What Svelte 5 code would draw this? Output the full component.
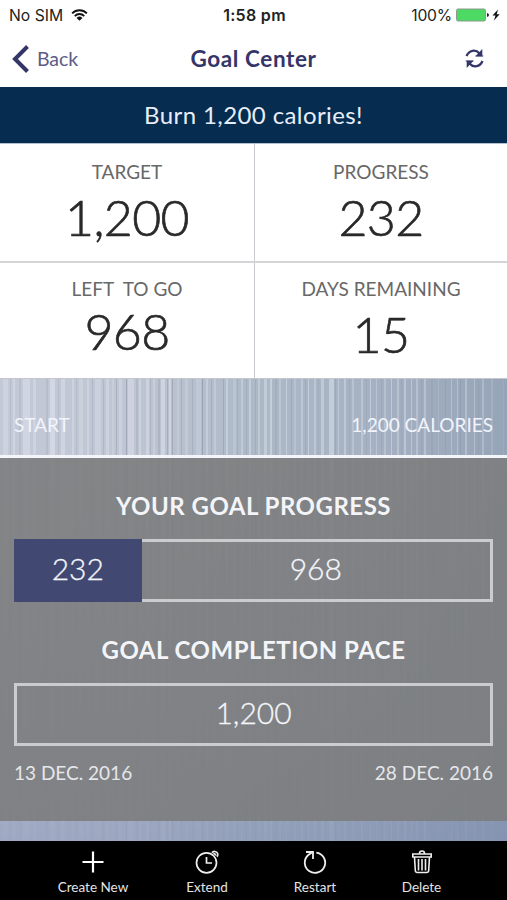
<script>
    const stats = [
        { name: 'target', label: 'TARGET', value: '1,200' },
        { name: 'progress', label: 'PROGRESS', value: '232' },
        { name: 'left', label: 'LEFT\u00a0 TO GO', value: '968' },
        { name: 'days', label: 'DAYS REMAINING', value: '15' }
    ];

    const done = 127.5;
    const total = 479;

    // brushed metal: x, width, opacity
    const light = [
        [3, 5, 0.25], [13, 2, 0.3], [23, 7, 0.35], [33, 3, 0.3], [50, 5, 0.4], [61, 4, 0.35],
        [72, 2, 0.3], [79, 4, 0.25], [87, 2, 0.3], [95, 6, 0.25], [106, 3, 0.3], [112, 2, 0.2],
        [119, 3, 0.3], [128, 6, 0.35], [139, 2, 0.3], [146, 3, 0.35], [153, 2, 0.25], [161, 4, 0.4],
        [169, 2, 0.4], [177, 2, 0.2], [185, 3, 0.2], [196, 5, 0.2], [206, 2, 0.3], [214, 2, 0.25],
        [226, 2, 0.35], [233, 3, 0.2], [241, 2, 0.3], [249, 2, 0.35], [258, 2, 0.3], [264, 3, 0.35],
        [270, 2, 0.4], [279, 2, 0.25], [286, 1, 0.4], [294, 2, 0.2], [301, 2, 0.3], [308, 1, 0.4],
        [314, 2, 0.3], [321, 3, 0.35], [329, 5, 0.4], [338, 1, 0.35], [344, 2, 0.35], [352, 2, 0.25],
        [361, 2, 0.3], [370, 1, 0.4], [376, 1, 0.3], [384, 2, 0.25], [391, 1, 0.4], [397, 2, 0.3],
        [404, 2, 0.35], [411, 1, 0.35], [416, 2, 0.3], [424, 2, 0.3], [438, 1, 0.15], [451, 1, 0.3],
        [457, 1, 0.3], [465, 2, 0.3], [474, 1, 0.3], [482, 2, 0.25], [491, 2, 0.15], [503, 1, 0.1]
    ];
    const dark = [
        [10, 1, 0.12], [19, 2, 0.1], [46, 2, 0.12], [58, 1, 0.12], [76, 1, 0.12], [92, 1, 0.15],
        [103, 1, 0.15], [116, 1, 0.2], [126, 1, 0.3], [136, 2, 0.12], [150, 1, 0.15], [158, 2, 0.15],
        [167, 1, 0.2], [172, 1, 0.25], [181, 1, 0.15], [192, 1, 0.15], [202, 1, 0.3], [211, 1, 0.15],
        [223, 1, 0.2], [237, 1, 0.15], [246, 1, 0.15], [255, 1, 0.15], [275, 2, 0.12], [291, 1, 0.15],
        [305, 1, 0.15], [318, 1, 0.12], [335, 1, 0.15], [349, 1, 0.12], [366, 1, 0.12], [381, 1, 0.12],
        [401, 1, 0.12], [421, 1, 0.12], [431, 2, 0.08], [445, 1, 0.12], [460, 1, 0.15], [478, 1, 0.1]
    ];
</script>

<main>
    <div class="status">
        <div class="carrier">
            <span>No SIM</span>
            <svg width="17" height="14" viewBox="0 0 18 14" fill="none" stroke="#111" stroke-width="2">
                <path d="M1.2 5.2a11 11 0 0 1 15.6 0" />
                <path d="M4 8.1a7 7 0 0 1 10 0" />
                <path d="M5.9 10.1a4.4 4.4 0 0 1 6.2 0L9 13.2z" fill="#111" stroke="none" />
            </svg>
        </div>
        <b>1:58 pm</b>
        <div class="power">
            <span>100%</span>
            <svg width="44" height="14" viewBox="0 0 44 14">
                <rect x="0.5" y="1" width="29" height="12" rx="1.5" fill="#4cd964" stroke="#8d9a8e" />
                <path d="M31 5v4q2-.3 2-2t-2-2z" fill="#222" />
                <path d="M42 1.500l-5.500 6h3l-1.600 5 5.800-6.200h-3z" fill="#111" />
            </svg>
        </div>
    </div>

    <nav>
        <button class="back">
            <svg width="18" height="28" viewBox="0 0 18 28" fill="none" stroke="#343568" stroke-width="4">
                <path d="M15.5 1.5L3 14l12.500 12.500" />
            </svg>
            <span>Back</span>
        </button>
        <h1>Goal Center</h1>
        <button class="sync" aria-label="Refresh">
            <svg width="19" height="19" viewBox="0 0 19 19">
                <path d="M1.500 7C4 1.200 10.500-.2 14.500 4.500M17.500 12C15 17.800 8.500 19.200 4.500 14.500" fill="none" stroke="#343568" stroke-width="2.300" />
                <path d="M17.300 0v7.200H10.500zM1.700 19v-7.200H8.500z" fill="#343568" />
                <path d="M10.500 7h7.800M.7 12h7.800" stroke="#343568" stroke-width="1.200" />
            </svg>
        </button>
    </nav>

    <div class="banner">Burn 1,200 calories!</div>

    <section class="stats">
        {#each stats as stat}
            <div class="stat {stat.name}">
                <span>{stat.label}</span>
                <strong>{stat.value}</strong>
            </div>
        {/each}
    </section>

    <section class="metal">
        <svg class="brushed" width="507" height="462" viewBox="0 0 507 462" preserveAspectRatio="none">
            <defs>
                <linearGradient id="steel" x1="0" y1="0" x2="1" y2="0">
                    <stop offset="0" stop-color="#c4c9d7" />
                    <stop offset="0.25" stop-color="#c0c5d3" />
                    <stop offset="0.5" stop-color="#adb9c7" />
                    <stop offset="0.75" stop-color="#a5b1c2" />
                    <stop offset="1" stop-color="#96a4b8" />
                </linearGradient>
                <linearGradient id="shade" x1="0" y1="0" x2="0" y2="1">
                    <stop offset="0.2" stop-color="#6f7fa8" stop-opacity="0" />
                    <stop offset="1" stop-color="#6f7fa8" stop-opacity="0.45" />
                </linearGradient>
                <linearGradient id="fade" x1="0" y1="0" x2="0" y2="1">
                    <stop offset="0.2" stop-color="#fff" />
                    <stop offset="1" stop-color="#fff" stop-opacity="0.35" />
                </linearGradient>
                <mask id="wear"><rect width="507" height="462" fill="url(#fade)" /></mask>
                <filter id="soft"><feGaussianBlur stdDeviation="0.6 0" /></filter>
            </defs>
            <rect width="507" height="462" fill="url(#steel)" />
            <g mask="url(#wear)">
                <g filter="url(#soft)">
                    {#each light as [x, w, o]}
                        <rect {x} y="0" width={w} height="462" fill="#eceff8" opacity={o} />
                    {/each}
                    {#each dark as [x, w, o]}
                        <rect {x} y="0" width={w} height="462" fill="#58687d" opacity={o} />
                    {/each}
                </g>
            </g>
            <rect width="507" height="462" fill="url(#shade)" />
        </svg>

        <div class="content">
            <div class="range">
                <span>START</span>
                <span>1,200 CALORIES</span>
            </div>

            <div class="panel">
                <h2>YOUR GOAL PROGRESS</h2>
                <div class="bar">
                    <div class="done" style="width: {done / total * 100}%"><span>232</span></div>
                    <div class="rest"><span>968</span></div>
                </div>
                <h2 class="pace">GOAL COMPLETION PACE</h2>
                <div class="bar whole"><span>1,200</span></div>
                <div class="dates">
                    <span>13 DEC. 2016</span>
                    <span>28 DEC. 2016</span>
                </div>
            </div>
        </div>
    </section>

    <footer>
        <button class="create">
            <svg width="24" height="24" viewBox="0 0 24 24" stroke="#fff" stroke-width="2.200">
                <path d="M12 1.500v21M1.500 12h21" />
            </svg>
            <span>Create New</span>
        </button>
        <button class="extend">
            <svg width="24" height="24" viewBox="0 0 24 24" fill="none" stroke="#eee" stroke-width="1.700">
                <circle cx="11.500" cy="12.800" r="10" />
                <path d="M11.500 7v6h5.500" />
                <path d="M17 2.800c1.200-2 4.600-1.700 5.500.5.500 1.300.2 2.500-.5 3.400M18.300 3.800c1.500-.4 2.300.4 2.200 1.800" />
            </svg>
            <span>Extend</span>
        </button>
        <button class="restart">
            <svg width="24" height="24" viewBox="0 0 24 24" fill="none" stroke="#eee" stroke-width="1.800">
                <path d="M13.300 2.600A10.200 10.200 0 1 1 5.300 5L10 1.800" />
                <path d="M3 2h7v7" />
            </svg>
            <span>Restart</span>
        </button>
        <button class="delete">
            <svg width="22" height="24" viewBox="0 0 22 24" fill="none" stroke="#eee" stroke-width="1.600">
                <path d="M8.500 3.500c0-3.300 5-3.300 5 0M1.800 4h18.400v3H1.800zM3.500 7l.8 13.500q.2 2 2 2h9.400q1.800 0 2-2l.8-13.500" />
                <path d="M7.500 9v11.500M11 9v11.500M14.500 9v11.500" />
            </svg>
            <span>Delete</span>
        </button>
    </footer>
</main>

<style>
    :global(body) {
        background: #fff;
    }

    main {
        width: 507px;
        height: 900px;
        display: flex;
        flex-direction: column;
        overflow: hidden;
        font-family: Lato, sans-serif;
        white-space: nowrap;
    }

    button {
        padding: 0;
        border: 0;
        background: none;
        font: inherit;
        color: inherit;
    }

    svg {
        display: block;
        flex: none;
    }

    h1, h2 {
        margin: 0;
    }

    .status {
        height: 30px;
        box-sizing: border-box;
        padding: 0 7px 0 9px;
        display: grid;
        grid-template-columns: 1fr auto 1fr;
        align-items: center;
        font-family: Inter, sans-serif;
        font-size: 15.7px;
        color: #222;
    }

    .status b {
        font-size: 16px;
        font-weight: 600;
        letter-spacing: 0.3px;
    }

    .carrier, .power {
        display: flex;
        align-items: center;
        gap: 8px;
    }

    .power {
        justify-content: flex-end;
        gap: 4px;
        letter-spacing: -0.2px;
    }

    nav {
        height: 57px;
        box-sizing: border-box;
        padding: 0 12px;
        display: grid;
        grid-template-columns: 1fr auto 1fr;
        align-items: center;
        color: #343568;
    }

    .back {
        display: flex;
        align-items: center;
        gap: 7px;
        font-size: 19.5px;
        letter-spacing: -0.1px;
    }

    .back span {
        color: #5c5c88;
    }

    h1 {
        font-size: 22.5px;
        font-weight: 700;
        letter-spacing: 0.6px;
        padding-bottom: 1px;
    }

    .sync {
        justify-self: end;
        margin-right: 11px;
    }

    .banner {
        height: 57px;
        box-sizing: border-box;
        border-bottom: 1px solid #b4bfd0;
        background: #062c50;
        color: #e8eef8;
        font-size: 24px;
        line-height: 55px;
        letter-spacing: 0.4px;
        text-align: center;
    }

    .stats {
        height: 235px;
        display: grid;
        grid-template-columns: 255px 252px;
        grid-template-rows: 119px 116px;
    }

    .stat {
        display: flex;
        flex-direction: column;
        align-items: center;
        border-bottom: 2px solid #d4d5d7;
        padding-top: 16px;
        box-sizing: border-box;
    }

    .stat:nth-child(odd) {
        border-right: 1px solid #c9cbd0;
    }

    .stat:nth-child(n + 3) {
        padding-top: 14px;
        border-bottom-width: 1px;
        border-bottom-color: #c3c6ca;
    }

    .stat span {
        font-size: 19px;
        line-height: 24px;
        color: #686868;
    }

    .stat strong {
        font-size: 50px;
        line-height: 60px;
        font-weight: 300;
        letter-spacing: -0.6px;
        color: #292929;
        -webkit-text-stroke: 0.7px #292929;
        padding-top: 3px;
    }

    .left strong {
        padding-top: 0;
    }

    .metal {
        height: 462px;
        display: grid;
    }

    .brushed, .content {
        grid-area: 1 / 1;
    }

    .content {
        z-index: 1;
    }

    .range {
        height: 79px;
        box-sizing: border-box;
        padding: 15px 14px 0;
        border-bottom: 3px solid #f4f5fa;
        display: flex;
        align-items: center;
        justify-content: space-between;
        color: #f1f4fb;
        font-size: 19px;
    }

    .panel {
        height: 363px;
        box-sizing: border-box;
        padding: 33px 14px 0;
        background: rgba(124, 125, 126, 0.91);
        color: #f4f5f9;
    }

    h2 {
        font-size: 24px;
        line-height: 30px;
        font-weight: 700;
        letter-spacing: 0.5px;
        text-align: center;
    }

    .bar {
        height: 63px;
        margin-top: 18px;
        display: flex;
        font-size: 30px;
        font-weight: 300;
        -webkit-text-stroke: 0.3px #f4f5f9;
    }

    .bar span {
        padding-bottom: 5px;
    }

    .done, .rest, .whole {
        box-sizing: border-box;
        display: flex;
        align-items: center;
        justify-content: center;
    }

    .done {
        background: #414872;
    }

    .rest {
        flex: 1;
        border: 3px solid #cbccce;
        border-left: 0;
    }

    .whole {
        border: 3px solid #cbccce;
    }

    .pace {
        margin-top: 33px;
    }

    .dates {
        margin-top: 15px;
        display: flex;
        justify-content: space-between;
        font-size: 19px;
        line-height: 24px;
        color: #e6e7ea;
    }

    footer {
        height: 59px;
        background: #000;
        color: #e4e4e4;
        display: grid;
        grid-template-columns: 120px 108px 108px 105px;
        padding-left: 33px;
        font-size: 13.5px;
    }

    footer button {
        display: flex;
        flex-direction: column;
        align-items: center;
        padding-top: 9px;
        gap: 5px;
    }
</style>
